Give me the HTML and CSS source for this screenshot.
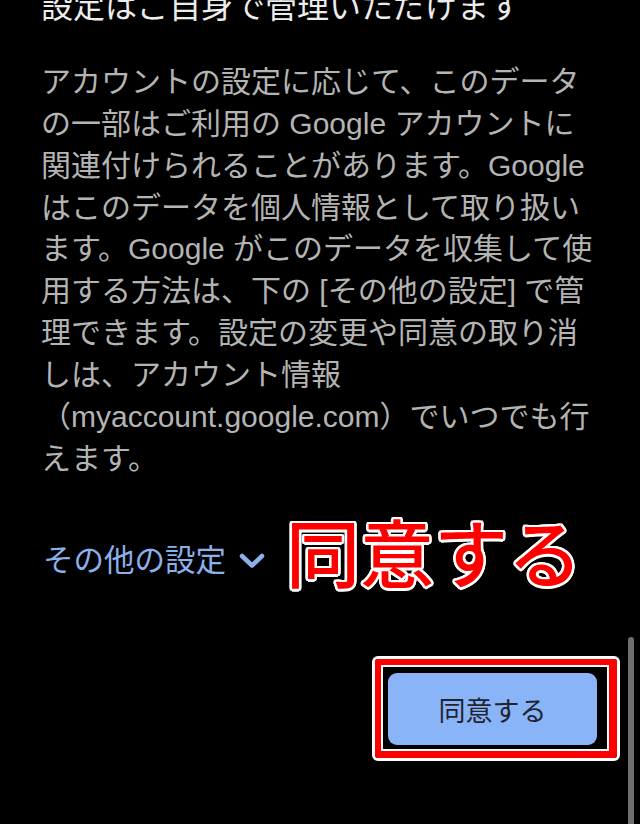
FILE: index.html
```html
<!DOCTYPE html>
<html lang="ja">
<head>
<meta charset="utf-8">
<title>設定</title>
<link rel="stylesheet" href="styles.css">
</head>
<body>
<main class="page">
  <h2 class="heading">設定はご自身で管理いただけます</h2>
  <p class="body">アカウントの設定に応じて、このデータ<br>の一部はご利用の Google アカウントに<br>関連付けられることがあります。Google<br>はこのデータを個人情報として取り扱い<br>ます。Google がこのデータを収集して使<br>用する方法は、下の [その他の設定] で管<br>理できます。設定の変更や同意の取り消<br>しは、アカウント情報<br>（myaccount.google.com）でいつでも行<br>えます。</p>
  <div class="row">
    <a class="more">その他の設定<svg class="chev" width="26" height="16" viewBox="0 0 26 16"><path d="M3 3 L13 12.5 L23 3" fill="none" stroke="#8cb0ea" stroke-width="4.5" stroke-linecap="round" stroke-linejoin="round"/></svg></a>
    <span class="callout">同意する</span>
  </div>
  <div class="actions">
    <div class="mark-outer">
      <div class="mark-red">
        <div class="mark-inner">
          <button class="agree">同意する</button>
        </div>
      </div>
    </div>
  </div>
</main>
<div class="scrollbar"></div>
</body>
</html>
```

FILE: styles.css
```css
html, body {
  margin: 0;
  padding: 0;
  background: #000;
  height: 824px;
  overflow: hidden;
}

body {
  position: relative;
  font-family: "Liberation Sans", "Noto Sans CJK JP", sans-serif;
}

.page {
  padding: 0 20px 0 41px;
}

.heading {
  margin: -15px 0 0 0;
  font-size: 32px;
  line-height: 44px;
  font-weight: 400;
  color: #ececec;
  white-space: nowrap;
}

.body {
  margin: 32px 0 0 0;
  font-size: 30px;
  line-height: 41.85px;
  color: #b4b4b4;
  white-space: nowrap;
}

.row {
  margin-top: 34px;
  height: 80px;
  display: flex;
  align-items: center;
}

.more {
  display: flex;
  align-items: center;
  padding-top: 14px;
  margin-left: 2px;
  font-size: 30.5px;
  line-height: 42px;
  color: #8cb0ea;
  white-space: nowrap;
}

.chev {
  margin-left: 13px;
  margin-top: 2px;
}

.callout {
  margin-left: 21px;
  margin-top: -6px;
  font-family: "Noto Sans CJK JP", sans-serif;
  font-size: 74px;
  line-height: 80px;
  font-weight: 500;
  color: #ff0000;
  white-space: nowrap;
  text-shadow:
    2.5px 0 0 #fff, -2.5px 0 0 #fff, 0 2.5px 0 #fff, 0 -2.5px 0 #fff,
    1.8px 1.8px 0 #fff, -1.8px 1.8px 0 #fff, 1.8px -1.8px 0 #fff, -1.8px -1.8px 0 #fff,
    2.3px 1px 0 #fff, -2.3px 1px 0 #fff, 2.3px -1px 0 #fff, -2.3px -1px 0 #fff,
    1px 2.3px 0 #fff, -1px 2.3px 0 #fff, 1px -2.3px 0 #fff, -1px -2.3px 0 #fff;
}

.actions {
  margin-top: 63px;
  display: flex;
  justify-content: flex-end;
}

.mark-outer {
  border: 3px solid #fff;
  border-radius: 6px;
}

.mark-red {
  border-style: solid;
  border-color: #ff0000;
  border-width: 6.5px 8px 7px 6.5px;
  border-radius: 3px;
}

.mark-inner {
  border: 2px solid #fff;
  padding: 6px 10px 4px 5px;
  background: #000;
}

.agree {
  display: block;
  width: 209px;
  height: 72px;
  border: none;
  border-radius: 9px;
  background: #8ab4f8;
  color: #1f2430;
  font-family: "Noto Sans CJK JP", sans-serif;
  font-size: 27px;
  padding: 0;
}

.scrollbar {
  position: absolute;
  left: 628px;
  top: 637px;
  width: 6px;
  height: 200px;
  border-radius: 3px;
  background: #6e6e6e;
}
```
